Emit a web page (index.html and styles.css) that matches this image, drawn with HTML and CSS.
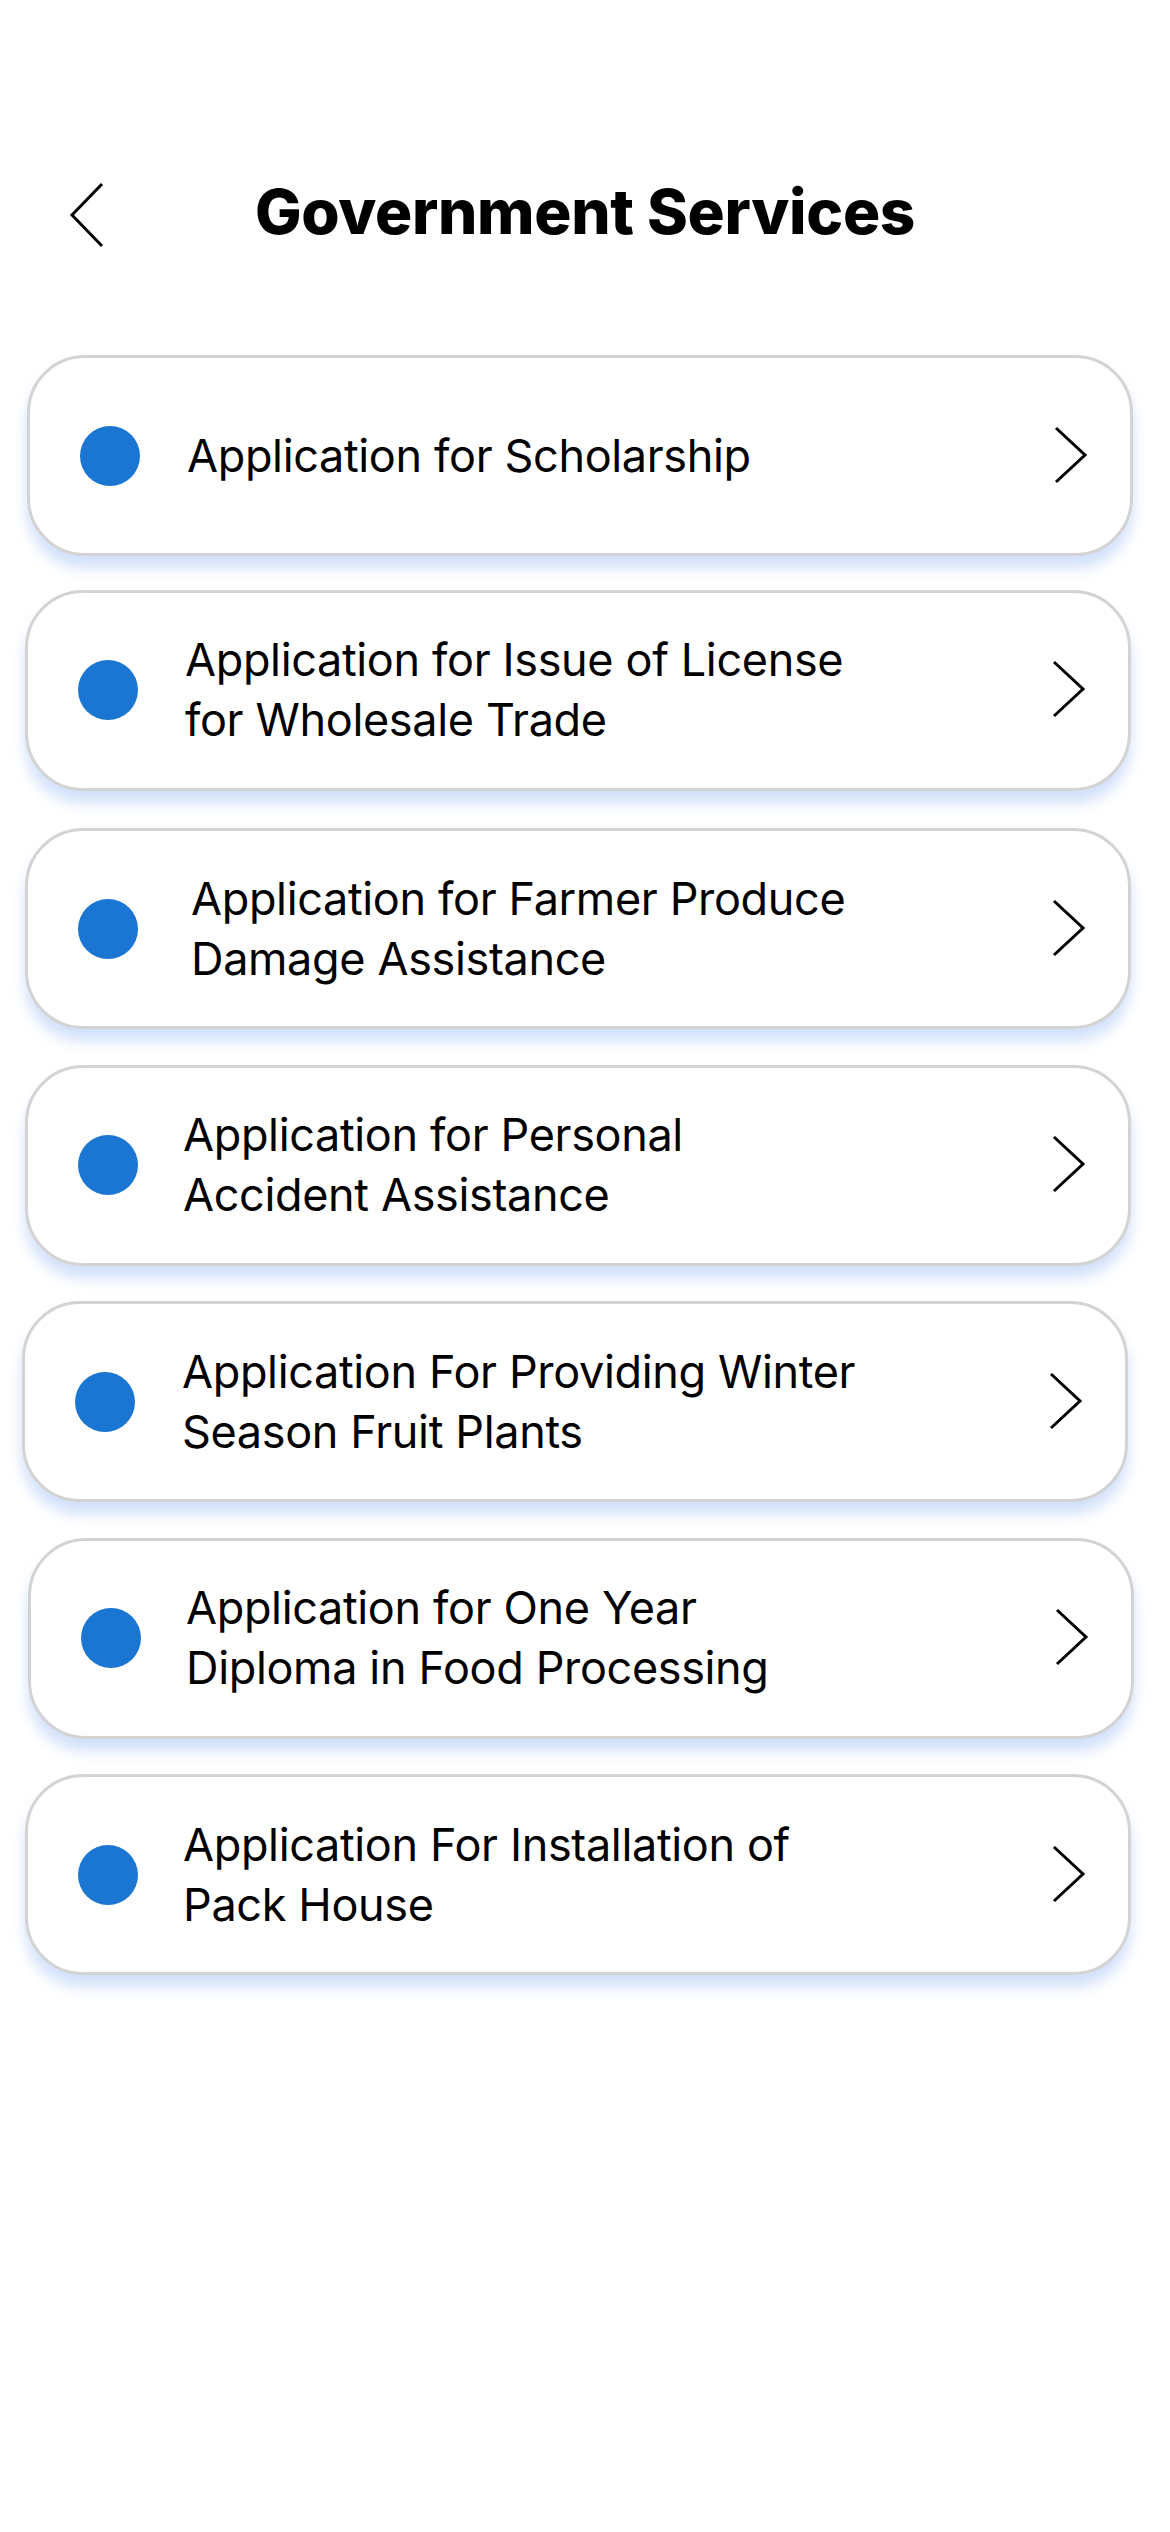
FILE: index.html
```html
<!DOCTYPE html>
<html lang="en">
<head>
<meta charset="utf-8">
<title>Government Services</title>
<link rel="stylesheet" href="styles.css">
</head>
<body>
<div class="page">
  <header class="header">
    <button class="back" aria-label="Back">
      <svg width="36" height="66" viewBox="0 0 36 66"><polyline points="33,2 3,33 33,64" fill="none" stroke="#000" stroke-width="3"/></svg>
    </button>
    <h1 class="title">Government Services</h1>
    <span></span>
  </header>

  <ul class="list">
    <li class="card card--r2">
      <span class="dot"></span>
      <span class="label">Application for Scholarship</span>
      <svg class="chev" width="34" height="58" viewBox="0 0 34 58"><polyline points="2,2 31,29 2,56" fill="none" stroke="#000" stroke-width="3"/></svg>
    </li>
    <li class="card card--up">
      <span class="dot"></span>
      <span class="label">Application for Issue of License<br>for Wholesale Trade</span>
      <svg class="chev" width="34" height="58" viewBox="0 0 34 58"><polyline points="2,2 31,29 2,56" fill="none" stroke="#000" stroke-width="3"/></svg>
    </li>
    <li class="card">
      <span class="dot"></span>
      <span class="label label--in">Application for Farmer Produce<br>Damage Assistance</span>
      <svg class="chev" width="34" height="58" viewBox="0 0 34 58"><polyline points="2,2 31,29 2,56" fill="none" stroke="#000" stroke-width="3"/></svg>
    </li>
    <li class="card">
      <span class="dot"></span>
      <span class="label label--out">Application for Personal<br>Accident Assistance</span>
      <svg class="chev" width="34" height="58" viewBox="0 0 34 58"><polyline points="2,2 31,29 2,56" fill="none" stroke="#000" stroke-width="3"/></svg>
    </li>
    <li class="card card--l3">
      <span class="dot"></span>
      <span class="label">Application For Providing Winter<br>Season Fruit Plants</span>
      <svg class="chev" width="34" height="58" viewBox="0 0 34 58"><polyline points="2,2 31,29 2,56" fill="none" stroke="#000" stroke-width="3"/></svg>
    </li>
    <li class="card card--r3">
      <span class="dot"></span>
      <span class="label label--out">Application for One Year<br>Diploma in Food Processing</span>
      <svg class="chev" width="34" height="58" viewBox="0 0 34 58"><polyline points="2,2 31,29 2,56" fill="none" stroke="#000" stroke-width="3"/></svg>
    </li>
    <li class="card">
      <span class="dot"></span>
      <span class="label label--out">Application For Installation of<br>Pack House</span>
      <svg class="chev" width="34" height="58" viewBox="0 0 34 58"><polyline points="2,2 31,29 2,56" fill="none" stroke="#000" stroke-width="3"/></svg>
    </li>
  </ul>
</div>
</body>
</html>
```

FILE: styles.css
```css
* { box-sizing: border-box; }

html, body {
  margin: 0;
  padding: 0;
  background: #ffffff;
}

body {
  font-family: Inter, "Noto Sans", "Liberation Sans", sans-serif;
  color: #000;
  width: 1170px;
  min-height: 2532px;
}

.page {
  padding-top: 172px;
}

.header {
  display: grid;
  grid-template-columns: 1fr auto 1fr;
  align-items: center;
  height: 80px;
}

.back {
  justify-self: start;
  margin-left: 69px;
  margin-top: 6px;
  padding: 0;
  border: 0;
  background: none;
  display: flex;
  cursor: pointer;
}

.title {
  margin: 0;
  font-size: 62px;
  line-height: 80px;
  font-weight: 800;
  letter-spacing: -0.3px;
  white-space: nowrap;
}

.list {
  list-style: none;
  margin: 103px 0 0 0;
  padding: 0;
  display: flex;
  flex-direction: column;
  gap: 35.5px;
}

.card {
  display: flex;
  align-items: center;
  height: 201px;
  width: 1106px;
  margin-left: 25px;
  padding: 0 42px 0 50px;
  border: 3px solid #d3d3d3;
  border-radius: 58px;
  background: #fff;
  box-shadow: 0 12px 14px rgba(90, 145, 235, 0.28);
}

.card--r2 { margin-left: 27px; }
.card--r3 { margin-left: 28px; }
.card--l3 { margin-left: 22px; }
.card--up { margin-top: -2px; margin-bottom: 2px; }

.dot {
  flex: none;
  width: 60px;
  height: 60px;
  border-radius: 50%;
  background: #1b76d3;
}

.label {
  flex: 1;
  margin-left: 47px;
  font-size: 45px;
  line-height: 60px;
  font-weight: 400;
  letter-spacing: -0.35px;
  white-space: nowrap;
}

.label--in { margin-left: 53px; }
.label--out { margin-left: 45px; }

.chev {
  flex: none;
  margin-top: -2px;
}
```
